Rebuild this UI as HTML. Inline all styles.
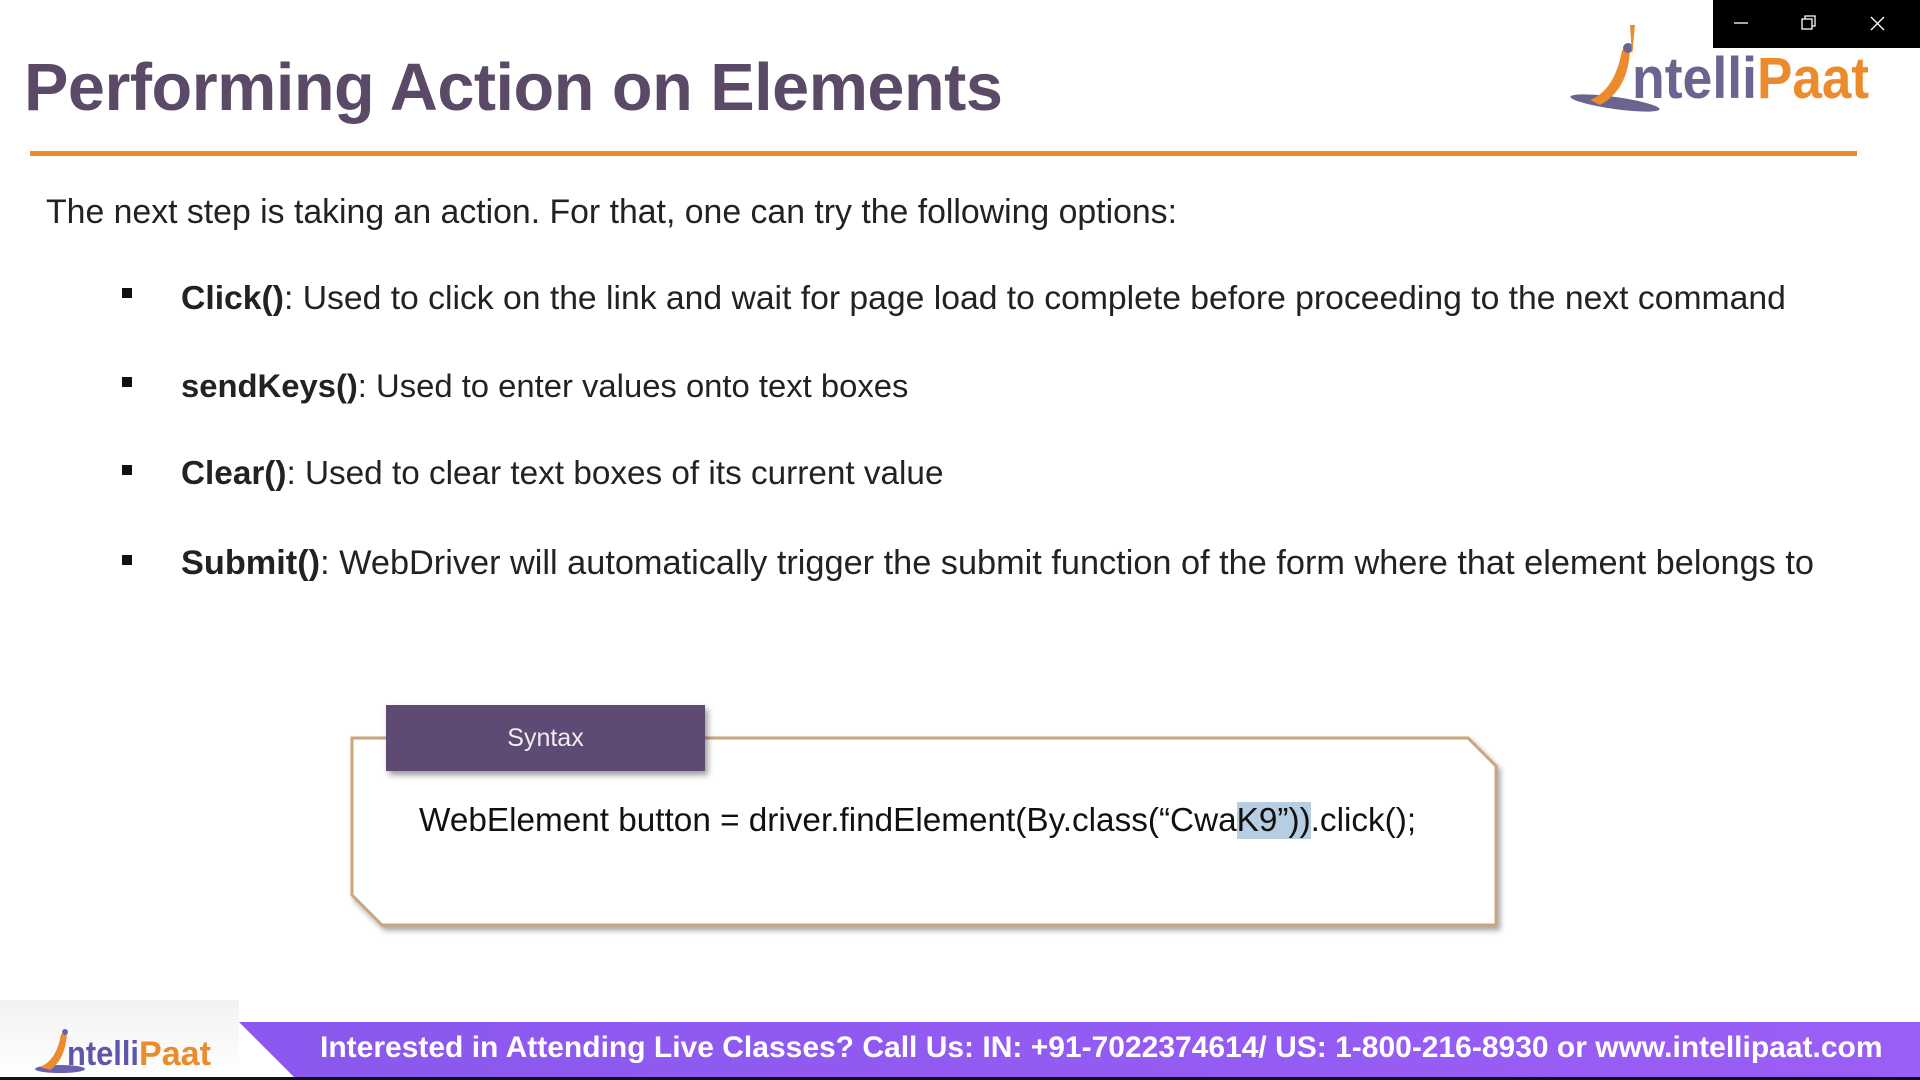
<!DOCTYPE html>
<html><head><meta charset="utf-8"><style>
*{margin:0;padding:0;box-sizing:border-box}
body{width:1920px;height:1080px;overflow:hidden;background:#fff;position:relative;font-family:"Liberation Sans",sans-serif}
.abs{position:absolute;white-space:nowrap}
</style></head><body>
<div class="abs" style="left:24px;top:50px;font-size:66.6px;font-weight:bold;color:#5a4a68;letter-spacing:-0.5px">Performing Action on Elements</div>
<div class="abs" style="left:30px;top:151px;width:1827px;height:5px;background:#ec8b2c"></div>

<div class="abs" style="left:1713px;top:0;width:207px;height:48px;background:#000"></div>
<svg class="abs" style="left:1713px;top:0" width="207" height="48">
<line x1="21" y1="23" x2="35" y2="23" stroke="#fff" stroke-width="1.3"/>
<rect x="89" y="19" width="10" height="10" fill="none" stroke="#fff" stroke-width="1.3"/>
<path d="M92 19 V16 H102 V26 H99" fill="none" stroke="#fff" stroke-width="1.3"/>
<path d="M158 17 L171 30 M171 17 L158 30" stroke="#fff" stroke-width="1.3"/>
</svg>

<svg class="abs" style="left:1560px;top:20px" width="310" height="110">
<ellipse cx="55" cy="83" rx="45" ry="6" fill="#6a6590" transform="rotate(8 55 83)"/>
<path d="M30 80 Q55 70 62 30 L70 30 Q68 70 40 85Z" fill="#ec8b2c"/>
<circle cx="68" cy="28" r="5" fill="#6a6590"/>
<path d="M70 5 L75 5 L72 35Z" fill="#ec8b2c"/>
<text x="72" y="78" font-family="Liberation Sans" font-weight="bold" font-size="58" fill="#6a6590" textLength="125" lengthAdjust="spacingAndGlyphs">ntelli</text>
<text x="197" y="78" font-family="Liberation Sans" font-weight="bold" font-size="58" fill="#ec8b2c" textLength="112" lengthAdjust="spacingAndGlyphs">Paat</text>
</svg>

<div class="abs" style="left:46px;top:193px;font-size:33.8px;color:#222">The next step is taking an action. For that, one can try the following options:</div>

<div class="abs" style="left:122px;top:288px;width:10px;height:10px;background:#111"></div>
<div class="abs" style="left:181px;top:279px;font-size:33.7px;color:#222"><b>Click()</b>: Used to click on the link and wait for page load to complete before proceeding to the next command</div>
<div class="abs" style="left:122px;top:377px;width:10px;height:10px;background:#111"></div>
<div class="abs" style="left:181px;top:367px;font-size:32.8px;color:#222"><b>sendKeys()</b>: Used to enter values onto text boxes</div>
<div class="abs" style="left:122px;top:465px;width:10px;height:10px;background:#111"></div>
<div class="abs" style="left:181px;top:455px;font-size:33.3px;color:#222"><b>Clear()</b>: Used to clear text boxes of its current value</div>
<div class="abs" style="left:122px;top:555px;width:10px;height:10px;background:#111"></div>
<div class="abs" style="left:181px;top:544px;font-size:34.3px;color:#222"><b>Submit()</b>: WebDriver will automatically trigger the submit function of the form where that element belongs to</div>

<svg class="abs" style="left:340px;top:725px" width="1180" height="215">
<defs><filter id="s"><feDropShadow dx="3" dy="4" stdDeviation="3" flood-color="#000" flood-opacity="0.35"/></filter></defs>
<path d="M12 13 H1128 L1156 41 V200 H42 L12 170 Z" fill="#fff" stroke="#c9a77a" stroke-width="3" filter="url(#s)"/>
</svg>
<div class="abs" style="left:386px;top:705px;width:319px;height:66px;background:#5e4a74;box-shadow:3px 4px 6px rgba(0,0,0,.4);color:#eee;font-size:25px;text-align:center;line-height:66px">Syntax</div>
<div class="abs" style="left:419px;top:802px;font-size:33.3px;color:#111">WebElement button = driver.findElement(By.class(“Cwa<span style="background:#b6cde2">K9”))</span>.click();</div>

<div class="abs" style="left:0;top:1000px;width:239px;height:80px;background:linear-gradient(#f2f2f2,#fff)"></div>
<div class="abs" style="left:239px;top:1022px;width:1681px;height:55px;background:linear-gradient(90deg,#8a58ee,#9b5ef6);clip-path:polygon(0 0,100% 0,100% 100%,55px 100%)"></div>
<div class="abs" style="left:0;top:1077px;width:1920px;height:3px;background:#111"></div>
<svg class="abs" style="left:25px;top:1012px" width="200" height="66">
<ellipse cx="35" cy="57" rx="25" ry="4" fill="#6a5fb0"/>
<path d="M15 55 Q32 48 36 22 L42 22 Q40 48 25 58Z" fill="#ec8b2c"/>
<circle cx="40" cy="20" r="3" fill="#6a5fb0"/>
<text x="42" y="53" font-family="Liberation Sans" font-weight="bold" font-size="34" fill="#5e56a8" textLength="72" lengthAdjust="spacingAndGlyphs">ntelli</text>
<text x="114" y="53" font-family="Liberation Sans" font-weight="bold" font-size="34" fill="#ec8b2c" textLength="72" lengthAdjust="spacingAndGlyphs">Paat</text>
</svg>
<div class="abs" style="left:320px;top:1031px;font-size:30px;font-weight:bold;color:#fff">Interested in Attending Live Classes? Call Us: IN: +91-7022374614/ US: 1-800-216-8930 or www.intellipaat.com</div>
</body></html>
